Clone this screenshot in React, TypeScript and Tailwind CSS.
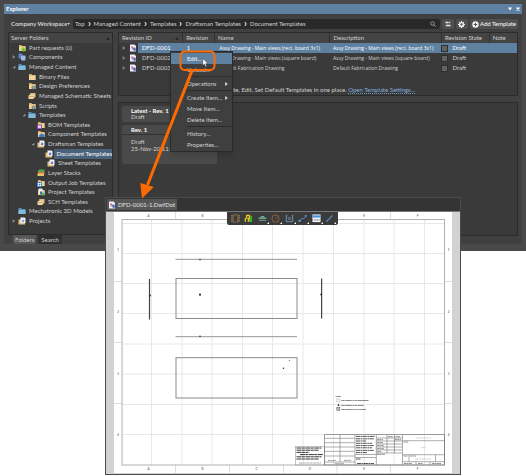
import { useState } from 'react'
import clsx from 'clsx'

type Badge = 'none' | 'plus' | 'blocks' | 'open' | 'gear' | 'stack' | 'purple' | 'cloud' | 'draft' | 'layers' | 'output' | 'project' | 'projects'

interface TreeNode {
  label: string
  level: 0 | 1 | 2 | 3
  badge: Badge
  arrow?: 'open' | 'closed'
}

const nodes: TreeNode[] = [
  { label: 'Part requests (0)', level: 0, badge: 'plus' },
  { label: 'Components', level: 0, badge: 'blocks', arrow: 'closed' },
  { label: 'Managed Content', level: 0, badge: 'open', arrow: 'open' },
  { label: 'Binary Files', level: 1, badge: 'none' },
  { label: 'Design Preferences', level: 1, badge: 'gear' },
  { label: 'Managed Schematic Sheets', level: 1, badge: 'stack' },
  { label: 'Scripts', level: 1, badge: 'gear' },
  { label: 'Templates', level: 1, badge: 'open', arrow: 'open' },
  { label: 'BOM Templates', level: 2, badge: 'purple' },
  { label: 'Component Templates', level: 2, badge: 'cloud' },
  { label: 'Draftsman Templates', level: 2, badge: 'draft', arrow: 'open' },
  { label: 'Document Templates', level: 3, badge: 'draft' },
  { label: 'Sheet Templates', level: 3, badge: 'draft' },
  { label: 'Layer Stacks', level: 2, badge: 'layers' },
  { label: 'Output Job Templates', level: 2, badge: 'output' },
  { label: 'Project Templates', level: 2, badge: 'project' },
  { label: 'SCH Templates', level: 2, badge: 'stack' },
  { label: 'Mechatronic 3D Models', level: 0, badge: 'open' },
  { label: 'Projects', level: 0, badge: 'projects', arrow: 'closed' },
]

const indent = ['pl-0', 'pl-[10px]', 'pl-[19px]', 'pl-[29px]']

const rows = [
  { id: 'DFD-0001', rev: '1', name: 'Assy Drawing - Main views (rect. board 3x1)', state: 'Draft' },
  { id: 'DFD-0002', rev: '1', name: 'Assy Drawing - Main views (square board)', state: 'Draft' },
  { id: 'DFD-0003', rev: '1', name: 'Default Fabrication Drawing', state: 'Draft' },
]

const crumbs = ['Top', 'Managed Content', 'Templates', 'Draftsman Templates', 'Document Templates']

const menu = [
  [{ label: 'Edit...' }, { label: 'Upload...' }],
  [{ label: 'Operations', sub: true }],
  [{ label: 'Create Item...', sub: true }, { label: 'Move Item...' }, { label: 'Delete Item...' }],
  [{ label: 'History...' }, { label: 'Properties...' }],
]

function FolderIcon({ badge }: { badge: Badge }) {
  return (
    <svg viewBox="0 0 16 16" className="w-[8px] h-[8px] shrink-0" aria-hidden="true">
      {badge === 'open' && (
        <>
          <path d="M1 2h5l2 2h7v10H1z" fill="#5790b4" />
          <path d="M1 6h14v8H1z" fill="#82b8d8" />
        </>
      )}
      {badge === 'blocks' && (
        <>
          <rect x="1" y="1" width="8" height="10" rx="2" fill="#5784c4" />
          <rect x="6" y="5" width="9" height="10" rx="2" fill="#9dbbe4" />
        </>
      )}
      {badge === 'stack' && (
        <>
          <path d="M4 2h11v9H7z" fill="#d9b878" />
          <path d="M1 7l3-2h10l-3 9H1z" fill="#f0d8a4" />
          <path d="M1 9h11" stroke="#b48b4c" />
        </>
      )}
      {badge === 'layers' && (
        <>
          <path d="M2 3l3-2h10v5H2z" fill="#55a448" />
          <path d="M2 6h13v4H2z" fill="#d7774a" />
          <path d="M1 9h13v5H1z" fill="#e6c568" />
        </>
      )}
      {(badge === 'draft' || badge === 'projects') && (
        <>
          <path d="M1 5h13v10H1z" fill="#e5bf7c" />
          <path d="M5 1h8l2 2v9H5z" fill="#f1f2f8" />
          <path d="M7 9l3-5 3 4-2 3z" fill={badge === 'draft' ? '#6574bd' : '#77a6cf'} />
        </>
      )}
      {['none', 'plus', 'gear', 'purple', 'cloud', 'output', 'project'].includes(badge) && (
        <>
          <path d="M2 2h5l1 2h7v10H2z" fill="#d8b068" />
          <path d="M2 5h13v9H2z" fill="#f0d498" />
        </>
      )}
      {badge === 'plus' && <path d="M11 7v8M7 11h8" stroke="#63c025" strokeWidth="3" />}
      {badge === 'gear' && <circle cx="11" cy="11" r="3" fill="#a0a9ad" stroke="#65747b" strokeWidth="2" />}
      {badge === 'purple' && <path d="M1 8h8v7H1z" fill="#e6cef5" stroke="#9350b6" strokeWidth="2" />}
      {badge === 'cloud' && <path d="M5 14a3 3 0 0 1 1-5 4 4 0 0 1 7 0 3 3 0 0 1 1 5z" fill="#3478cf" />}
      {badge === 'output' && <path d="M1 7h8v8H1zM3 11h4M5 9v4" fill="#fff" stroke="#4189cb" strokeWidth="2" />}
      {badge === 'project' && (
        <>
          <path d="M4 1h6l2 3v8H4z" fill="#e8eff6" />
          <path d="M6 7h5v6H6z" fill="#3b75b1" />
          <path d="M10 10h5v5h-5z" fill="#61b445" />
        </>
      )}
    </svg>
  )
}

function DocIcon() {
  return (
    <svg viewBox="0 0 16 16" className="w-[8px] h-[8px] shrink-0" aria-hidden="true">
      <path d="M2 1h9l3 3v11H2z" fill="#eef0fa" />
      <path d="M4 5h4l1 4H5z" fill="#d56a7c" />
      <path d="M7 8l6-1 1 6-4 1z" fill="#5c69bb" />
      <path d="M5 12l5-5" stroke="#8d7fc4" strokeWidth="1.5" />
    </svg>
  )
}

function Triangle({ open }: { open?: boolean }) {
  return (
    <svg viewBox="0 0 6 6" className="w-[4px] h-[4px] shrink-0" aria-hidden="true">
      <path d={open ? 'M5 1v4H1z' : 'M1 0l4 3-4 3z'} fill={open ? '#a5a5a5' : '#858585'} />
    </svg>
  )
}

function ServerFolders() {
  const [selected, setSelected] = useState('Document Templates')

  return (
    <section className="w-[105px] shrink-0 flex flex-col">
      <div className="border border-[#2b2b2b] bg-[#3a3a3a] pb-[8px]">
        <h2 className="h-[10px] px-[2px] flex items-center justify-between bg-[#444444]">
          Server Folders
          <svg viewBox="0 0 6 4" className="w-[4px] h-[3px]" aria-hidden="true">
            <path d="M0 4l3-4 3 4z" fill="#222" />
          </svg>
        </h2>
        <ul className="h-[183px] flex flex-col">
          {nodes.map((node) => (
            <li key={node.label} className={clsx('flex-1 min-h-0 flex items-center', indent[node.level])}>
              <span className="w-[9px] flex justify-center">
                {node.arrow && <Triangle open={node.arrow === 'open'} />}
              </span>
              <FolderIcon badge={node.badge} />
              <button
                type="button"
                onClick={() => setSelected(node.label)}
                className={clsx(
                  'self-stretch flex items-center ml-px pl-[2px] whitespace-nowrap text-left',
                  selected === node.label && 'flex-1 bg-[#49627b] text-white'
                )}
              >
                {node.label}
              </button>
            </li>
          ))}
        </ul>
      </div>
      <div className="flex gap-[2px] pl-[5px]">
        <button type="button" className="h-[9px] px-[2px] rounded-b-[2px] bg-[#575757]">Folders</button>
        <button type="button" className="h-[9px] px-[3px] rounded-b-[2px] bg-[#303030]">Search</button>
      </div>
    </section>
  )
}

function ToolBar() {
  return (
    <div className="flex items-center h-[10px] gap-[2px]">
      <label className="flex items-center shrink-0 w-[63px] pl-[3px] font-bold">
        <select aria-label="Workspace" className="appearance-none bg-transparent w-[56px] h-[10px] font-bold outline-none">
          <option>Company Workspace</option>
        </select>
        <svg viewBox="0 0 6 4" className="w-[3px] h-[2px]" aria-hidden="true">
          <path d="M0 0h6L3 4z" fill="#ccc" />
        </svg>
      </label>
      <div className="flex-1 min-w-0 h-[10px] flex items-center rounded-[2px] bg-[#292929] px-[2px]">
        <nav className="flex items-center whitespace-nowrap">
          {crumbs.map((crumb, i) => (
            <span key={crumb} className="flex items-center">
              {i > 0 && (
                <svg viewBox="0 0 4 6" className="w-[3px] h-[4px] mx-[3px]" aria-hidden="true">
                  <path d="M1 0l2 3-2 3" stroke="#ddd" strokeWidth="1.6" fill="none" />
                </svg>
              )}
              <a href="#">{crumb}</a>
            </span>
          ))}
        </nav>
        <input type="text" aria-label="Search" className="flex-1 min-w-0 h-[8px] bg-transparent outline-none" />
        <svg viewBox="0 0 12 12" className="w-[6px] h-[6px] mr-[2px]" aria-hidden="true">
          <circle cx="5" cy="5" r="3.5" stroke="#b5b5b5" strokeWidth="1.5" fill="none" />
          <path d="M8 8l3 3" stroke="#b5b5b5" strokeWidth="1.8" />
        </svg>
      </div>
      <button type="button" aria-label="Show panels" className="w-[12px] h-[10px] flex items-center justify-center rounded-[2px] bg-[#505050]">
        <svg viewBox="0 0 12 12" className="w-[6px] h-[6px]" aria-hidden="true">
          <path d="M1 3h6M4 9h7" stroke="#eee" strokeWidth="3" />
          <path d="M8 1v4l3-2zM4 7v4L1 9z" fill="#eee" />
        </svg>
      </button>
      <button type="button" aria-label="Settings" className="w-[12px] h-[10px] flex items-center justify-center rounded-[2px] bg-[#505050]">
        <svg viewBox="0 0 12 12" className="w-[7px] h-[7px]" aria-hidden="true">
          <circle cx="6" cy="6" r="3.2" stroke="#f2f2f2" strokeWidth="2.4" fill="none" />
          <path d="M6 0v2M6 10v2M0 6h2M10 6h2M2 2l1 1M9 9l1 1M10 2L9 3M2 10l1-1" stroke="#f2f2f2" strokeWidth="2" />
        </svg>
      </button>
      <button type="button" className="h-[10px] px-[2px] flex items-center gap-px rounded-[2px] bg-[#505050] whitespace-nowrap text-white">
        <svg viewBox="0 0 12 12" className="w-[7px] h-[7px]" aria-hidden="true">
          <circle cx="6" cy="6" r="5.5" fill="#f2f2f2" />
          <path d="M6 3v6M3 6h6" stroke="#505050" strokeWidth="1.8" />
        </svg>
        Add Template
      </button>
    </div>
  )
}

function RevisionTable() {
  const [selected, setSelected] = useState('DFD-0001')

  return (
    <div className="border border-[#2b2b2b] bg-[#3a3a3a] pb-px">
      <table className="w-full table-fixed text-left whitespace-nowrap">
        <colgroup>
          <col className="w-[16%]" />
          <col className="w-[8%]" />
          <col />
          <col className="w-[28%]" />
          <col className="w-[12%]" />
          <col className="w-[7%]" />
        </colgroup>
        <thead className="bg-[#444444]">
          <tr className="h-[10px]">
            {['Revision ID', 'Revision', 'Name', 'Description', 'Revision State', 'Note'].map((title, i) => (
              <th key={title} className={clsx('p-0 pl-[3px] font-normal', i > 0 && 'border-l border-[#303030]')}>
                {title === 'Revision ID' ? (
                  <span className="flex items-center justify-between pr-[3px]">
                    {title}
                    <svg viewBox="0 0 6 4" className="w-[4px] h-[3px]" aria-hidden="true">
                      <path d="M0 4l3-4 3 4z" fill="#222" />
                    </svg>
                  </span>
                ) : title}
              </th>
            ))}
          </tr>
        </thead>
        <tbody>
          {rows.map((row) => {
            const bg = row.id === selected && 'bg-[#5f81a1] text-white'
            return (
              <tr key={row.id} className="h-[10px]" onClick={() => setSelected(row.id)}>
                <td className="p-0">
                  <div className="flex items-center">
                    <span className="w-[10px] flex justify-center"><Triangle /></span>
                    <DocIcon />
                    <span className={clsx('flex-1 ml-px pl-[4px] leading-[10px]', bg)}>{row.id}</span>
                  </div>
                </td>
                <td className={clsx('p-0 pl-[4px]', bg)}>{row.rev}</td>
                <td className={clsx("p-0 pl-[5px] font-['Open_Sans',sans-serif] text-[5px]", bg)}>{row.name}</td>
                <td className={clsx("p-0 pl-[3px] font-['Open_Sans',sans-serif] text-[5px]", bg)}>{row.name}</td>
                <td className={clsx('p-0', bg)}>
                  <label className="flex items-center gap-[4px]">
                    <input type="checkbox" className="appearance-none w-[7px] h-[7px] border border-[#2f2f2f] bg-[#626262]" />
                    {row.state}
                  </label>
                </td>
                <td className={clsx('p-0', bg)} />
              </tr>
            )
          })}
        </tbody>
      </table>
      <p className="mt-[13px] leading-[8px] text-center">
        Create, Edit, Set Default Templates in one place.{' '}
        <a href="#" className="text-[#83aedb] border-b border-dotted border-[#6c93bb]">Open Template Settings...</a>
      </p>
    </div>
  )
}

function RevisionDetails() {
  return (
    <div className="flex-1 border border-[#2b2b2b] bg-[#3a3a3a] p-[3px] flex flex-col gap-[3px]">
      <div className="w-[95px] h-[16px] pl-[9px] flex flex-col justify-center rounded-[2px] bg-[#4a4a4a] leading-[6px]">
        <strong className="text-white">Latest - Rev. 1</strong>
        <span>Draft</span>
      </div>
      <div className="w-[95px] h-[39px] rounded-[2px] bg-[#4a4a4a] leading-[7px]">
        <strong className="block pl-[9px] leading-[9px] border-b border-[#333333] text-white">Rev. 1</strong>
        <p className="pl-[9px] pt-[3px]">Draft</p>
        <p className="pl-[9px]">25-Nov-20 11:20</p>
      </div>
    </div>
  )
}

function ContextMenu() {
  return (
    <div role="menu" className="absolute left-[170px] top-[51px] w-[63px] py-px border border-[#2a2a2a] bg-[#3f3f3f] shadow-md">
      {menu.map((group, g) => (
        <div key={g}>
          {g > 0 && <div className="h-[3px] flex items-center ml-[16px]"><hr className="w-full border-[#2c2c2c]" /></div>}
          {group.map((item) => (
            <button
              key={item.label}
              type="button"
              role="menuitem"
              className={clsx(
                'w-full h-[11px] pl-[16px] pr-[4px] flex items-center justify-between whitespace-nowrap',
                item.label === 'Edit...' && 'bg-[#5f81a1] text-white'
              )}
            >
              {item.label}
              {'sub' in item && (
                <svg viewBox="0 0 4 6" className="w-[3px] h-[4px]" aria-hidden="true">
                  <path d="M0 0l4 3-4 3z" fill="#ddd" />
                </svg>
              )}
            </button>
          ))}
        </div>
      ))}
    </div>
  )
}

const tools = [
  { name: 'Board assembly view', more: false },
  { name: 'Board fabrication view', more: false },
  { name: 'Section view', more: true },
  { name: 'Center mark', more: true },
  { name: 'Dimension', more: true },
  { name: 'Callout', more: true },
  { name: 'Table', more: true },
  { name: 'Line', more: true },
]

function ToolIcon({ name }: { name: string }) {
  return (
    <svg viewBox="0 0 20 20" className="w-[9px] h-[9px]" aria-hidden="true">
      {name === 'Board assembly view' && (
        <>
          <rect x="5" y="2" width="10" height="16" fill="none" stroke="#77705f" strokeWidth="2" />
          <path d="M2 2v16M18 2v16" stroke="#b5782c" strokeWidth="3" strokeDasharray="3 1" />
        </>
      )}
      {name === 'Board fabrication view' && (
        <>
          <path d="M9 18V9l9-6v15z" fill="#36ad2d" />
          <path d="M3 17v-6l3-3V3h6v5l-4 4M12 7l-3 10" stroke="#f0c122" strokeWidth="3" fill="none" />
        </>
      )}
      {name === 'Section view' && (
        <>
          <path d="M4 8l3-3h6l3 3z" fill="#8bc0df" />
          <path d="M1 8h18v3H1z" fill="#67b276" />
          <path d="M2 13h16v2H2z" fill="#80a6bf" />
        </>
      )}
      {name === 'Center mark' && (
        <>
          <circle cx="10" cy="10" r="8" stroke="#9c6433" strokeWidth="2" fill="none" />
          <path d="M10 11l4-4" stroke="#9c6433" strokeWidth="2" />
        </>
      )}
      {name === 'Dimension' && (
        <>
          <path d="M3 2v15h14V2M2 4h3M15 4h3" stroke="#6f9cc4" strokeWidth="2" fill="none" />
          <path d="M7 7h6v6H7z" fill="#66727e" />
        </>
      )}
      {name === 'Callout' && (
        <>
          <path d="M3 16l6-6h5l4-6" stroke="#5292d4" strokeWidth="2" fill="none" />
          <path d="M1 13h5v5H1zM15 2h4v4h-4z" fill="#5292d4" />
        </>
      )}
      {name === 'Table' && (
        <>
          <path d="M1 1h18v17H1z" fill="#f3f5f7" />
          <path d="M1 3h18v5H1z" fill="#4c91dc" />
          <path d="M3 13h14" stroke="#888" strokeWidth="3" strokeDasharray="3 1" />
        </>
      )}
      {name === 'Line' && <path d="M3 17L17 3" stroke="#5292d4" strokeWidth="2.8" />}
    </svg>
  )
}

const gridX = [151.5, 182, 212, 242.5, 272.5, 303, 333.5, 364, 394, 424.5]
const gridY = [223.5, 253.5, 283.5, 313.5, 344, 374, 404.5, 434.5]
const zoneX = [175.5, 229.5, 283.5, 337, 390.5]
const zoneY = [281.5, 342.5, 403.5]
const colLabels = [148.5, 202.5, 256.5, 310, 364, 417.5]
const rowLabels = [250, 312, 373.5, 434.5]

function TitleBlock() {
  return (
    <g stroke="#777" strokeWidth="0.6" fill="none">
      {/* disclaimer */}
      <rect x="295.5" y="446.5" width="29" height="18.5" stroke="#999" />
      <path d="M296.5 448h25M296.5 450.2h22M296.5 452.4h12M300 454.6h23M296.5 456.8h25M296.5 459h22" stroke="#333" strokeWidth="1" strokeDasharray="5 .4 3 .5" />
      <path d="M299 463h22" stroke="#777" strokeDasharray="3 .5" />
      {/* revision list and notes */}
      <rect x="324.5" y="434.7" width="120" height="30.3" stroke="#666" />
      <path d="M324.5 438.3H355M324.5 442.7H355M324.5 447H355M324.5 451.3H355M324.5 456H355M324.5 462H355" />
      <path d="M340 434.7V462M355 434.7V465M376.3 434.7V465" />
      <path d="M328 460.4h8M344 460.4h7M335 463.7h9" stroke="#555" strokeDasharray="2 .4" />
      <path d="M356 436.4h19M356 438.8h18M356 441h10M356 443.3h16M356 445.6h18M356 447.8h16M356 450.4h18M356 452.6h11M356 459h5M357 463.5h17" stroke="#444" strokeWidth="0.9" strokeDasharray="4 .5 2 .4" />
      <path d="M355 454.5h21.3M355 457.5h21.3" />
      {/* approvals */}
      <path d="M376.3 438h26M376.3 441h26M376.3 444h26M376.3 447h26M376.3 450h26M376.3 453h26M387 434.7V453M394.5 434.7V453M402.5 434.7V465" />
      <path d="M388 436.7h5M395.5 436.7h5M377 439.7h6M395 439.7h6M377 442.7h6M377 445.7h7M377 448.7h7M377 451.7h4M377 454.3h8" stroke="#333" strokeDasharray="2 .4" />
      <path d="M402.5 440.7h42M402.5 454.7h42M402.5 461.7h42M409 454.7v7M435.5 454.7v7M416 461.7v3.3M430 461.7v3.3" />
      <path d="M403.5 442h5M403.5 456h4M410 456h6M404 463.5h8M418 463.5h5M432 463.5h9" stroke="#444" strokeDasharray="2 .4" />
      <path d="M416 438h15M421 447.7h5M415 459h16" stroke="#bbb" strokeDasharray="3 .5" />
    </g>
  )
}

function Sheet() {
  return (
    <svg viewBox="114 212 338 261" className="block w-full bg-white" role="img" aria-label="Drawing sheet">
      <path d={gridX.map((x) => `M${x} 219.5V465`).join('') + gridY.map((y) => `M122 ${y}H444.5`).join('')} stroke="#e8e8e8" strokeWidth="1" />
      <path d={zoneX.map((x) => `M${x} 212v7.5M${x} 465v8`).join('') + zoneY.map((y) => `M114 ${y}h8M444.5 ${y}h7.5`).join('')} stroke="#ddd" strokeWidth="1" />
      <rect x="122" y="219.5" width="322.5" height="245.5" fill="none" stroke="#b0b0b0" strokeWidth="1" />
      <g fontSize="3" fill="#444" textAnchor="middle">
        {colLabels.map((x, i) => (
          <g key={x}>
            <text x={x} y="216.8">{'ABCDEF'[i]}</text>
            <text x={x} y="470">{'ABCDEF'[i]}</text>
          </g>
        ))}
        {rowLabels.map((y, i) => (
          <g key={y}>
            <text x="118" y={y + 1}>{i + 1}</text>
            <text x="448.5" y={y + 1}>{i + 1}</text>
          </g>
        ))}
      </g>
      <g fill="none" stroke="#8a8a8a" strokeWidth="1">
        <path d="M175.5 259.3H297M175.5 336.6H297" stroke="#aaa" strokeWidth="1.2" />
        <rect x="176" y="278.5" width="121" height="40" />
        <rect x="176" y="357.7" width="121" height="40.3" />
        <path d="M149.5 279v40.5M321.6 278.5v40" stroke="#444" strokeWidth="1.2" />
      </g>
      <g fill="#333">
        <circle cx="200" cy="259.6" r="0.8" />
        <circle cx="200" cy="294.7" r="1.1" />
        <circle cx="200" cy="336.4" r="0.8" />
        <circle cx="150" cy="295.5" r="1" />
        <circle cx="321.2" cy="294.5" r="1" />
        <circle cx="283.5" cy="368.2" r="0.8" />
        <circle cx="289.3" cy="360.3" r="0.5" />
      </g>
      <g fontSize="2" fontWeight="bold" fill="#000">
        <text x="335.5" y="397.3">Notes</text>
        <text x="341" y="401.4">This element is for applications</text>
        <text x="341" y="405.6">This element is for details</text>
        <text x="341" y="409.8">This element is for all details</text>
        <rect x="336.8" y="399" width="3" height="3" fill="none" stroke="#aaa" strokeWidth="0.5" />
        <path d="M337.5 405.8l1-2 1 2z" />
        <rect x="336.8" y="407.4" width="3" height="3" fill="#bbb" stroke="#555" strokeWidth="0.5" />
      </g>
      <TitleBlock />
    </svg>
  )
}

function DocumentWindow() {
  return (
    <section className="absolute left-[105px] right-[65px] top-[197px] border border-[#4b4b4b] bg-[#343434]">
      <div className="h-[13px] px-px pt-px">
        <button type="button" className="h-[11px] pl-px pr-[2px] flex items-center gap-[2px] bg-[#565656] text-[#e0e0e0]">
          <DocIcon />
          DFD-0001-1.DwfDot
        </button>
      </div>
      <div className="relative bg-[#d2d2d2] border-t border-[#777777] pl-[8px] pr-[8px] pb-px">
        <Sheet />
        <div className="absolute left-0 right-px top-0 flex justify-center">
          <div role="toolbar" className="w-[111px] h-[13px] px-[2px] flex items-center justify-between rounded-b-[2px] bg-[#3b3b3b]">
            {tools.map((tool) => (
              <button key={tool.name} type="button" aria-label={tool.name} className="relative w-[13px] h-[13px] flex items-center justify-center">
                <ToolIcon name={tool.name} />
                {tool.more && (
                  <svg viewBox="0 0 4 4" className="absolute right-0 bottom-px w-[2px] h-[2px]" aria-hidden="true">
                    <path d="M4 0v4H0z" fill="#fff" />
                  </svg>
                )}
              </button>
            ))}
          </div>
        </div>
      </div>
    </section>
  )
}

// Orange highlight round the Edit command, with the arrow to the opened document
function Callout() {
  return (
    <svg viewBox="0 0 240 210" className="absolute left-0 top-0 w-[240px] h-[210px] pointer-events-none" aria-hidden="true">
      <rect x="180.5" y="51.5" width="34" height="18.5" rx="4" fill="none" stroke="#ff6a00" strokeWidth="2" />
      <path d="M192 70.5L147.5 185" stroke="#ff6a00" strokeWidth="3" />
      <path d="M142 198.5L140.3 183l13.5 4z" fill="#ff6a00" />
      <path d="M202.8 58.2v7.4l1.7-1.5 1.2 2.7 1.2-.6-1.2-2.5h2.2z" fill="#fff" stroke="#222" strokeWidth="0.4" />
    </svg>
  )
}

export default function App() {
  return (
    <main className="relative w-full min-h-screen bg-white font-['Lato','Segoe_UI',sans-serif] text-[6px] leading-[8px] text-[#d0d0d0]">
      <section className="p-[4px] pb-[7px] bg-[#494949]">
        <header className="h-[10px] px-[2px] flex items-center justify-between bg-[#5f81a1] text-white">
          <h1 className="font-bold">Explorer</h1>
          <div className="flex gap-[4px]">
            <button type="button" aria-label="Panel options" className="w-[4px] h-[4px]">
              <svg viewBox="0 0 8 8"><path d="M0 1h8L4 7z" fill="#fff" /></svg>
            </button>
            <button type="button" aria-label="Close" className="w-[4px] h-[4px]">
              <svg viewBox="0 0 8 8"><path d="M1 1l6 6M7 1L1 7" stroke="#fff" strokeWidth="2.4" /></svg>
            </button>
          </div>
        </header>
        <div className="bg-[#404040] px-[4px] pt-[5px]">
          <ToolBar />
          <div className="flex gap-[5px] mt-[3px]">
            <ServerFolders />
            <div className="flex-1 min-w-0 flex flex-col gap-[6px] pb-[8px]">
              <RevisionTable />
              <RevisionDetails />
            </div>
          </div>
        </div>
      </section>
      <ContextMenu />
      <DocumentWindow />
      <Callout />
    </main>
  )
}
